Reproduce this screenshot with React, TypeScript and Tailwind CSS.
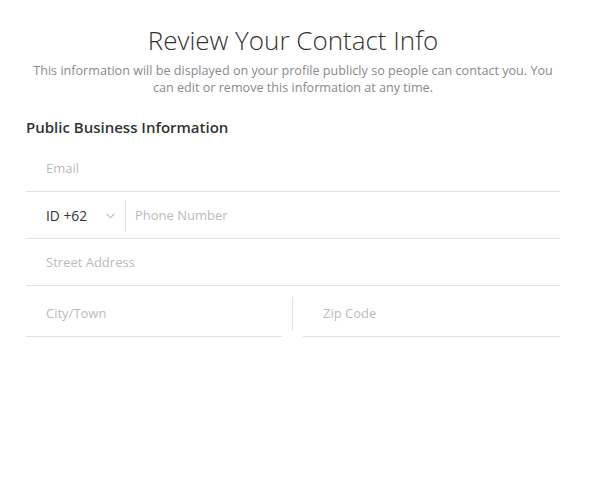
import React from "react";

export default function App() {
  return (
    <div className="w-[596px] h-[489px] bg-white" style={{ fontFamily: '"Open Sans", "Noto Sans", sans-serif' }}>
      <div className="pt-[22px] ml-[26px] w-[534px]">
        <h1 className="text-center text-[26px] leading-[36px] font-light text-[#333]">Review Your Contact Info</h1>
        <p className="mt-[4px] mx-auto w-[528px] text-center text-[12.6px] leading-[17px] text-[#8a8a8a]">
          This information will be displayed on your profile publicly so people can contact you. You can edit or remove this information at any time.
        </p>
        <h2 className="mt-[21px] text-[15px] leading-[20px] font-semibold text-[#333]">Public Business Information</h2>
        <div className="mt-[8px] w-[534px]">
          <div className="h-[47px] flex items-center pt-[2px] border-b border-[#e1e1e1] pl-[20px] text-[13px] text-[#bbb]">Email</div>
          <div className="h-[47px] flex items-center pt-[2px] border-b border-[#e1e1e1] text-[13px]">
            <div className="pl-[20px] w-[99px] flex items-center justify-between pr-[10px] text-[#333]">
              <span className="text-[13.8px]">ID +62</span>
              <svg width="9" height="6" viewBox="0 0 9 6" fill="none"><path d="M0.5 0.8 L4.5 4.8 L8.5 0.8" stroke="#999" strokeWidth="1"/></svg>
            </div>
            <div className="h-[32px] w-px bg-[#e1e1e1]" />
            <span className="pl-[9px] text-[#bbb]">Phone Number</span>
          </div>
          <div className="h-[47px] flex items-center pt-[2px] border-b border-[#e1e1e1] pl-[20px] text-[13px] text-[#bbb]">Street Address</div>
          <div className="mt-[4px] flex items-center text-[13px] text-[#bbb]">
            <div className="w-[256px] h-[47px] flex items-center pt-[2px] border-b border-[#e1e1e1] pl-[20px]">City/Town</div>
            <div className="w-[21px] flex justify-center"><div className="h-[34px] w-px bg-[#e1e1e1]" /></div>
            <div className="w-[257px] h-[47px] flex items-center pt-[2px] border-b border-[#e1e1e1] pl-[20px]">Zip Code</div>
          </div>
        </div>
      </div>
    </div>
  );
}
